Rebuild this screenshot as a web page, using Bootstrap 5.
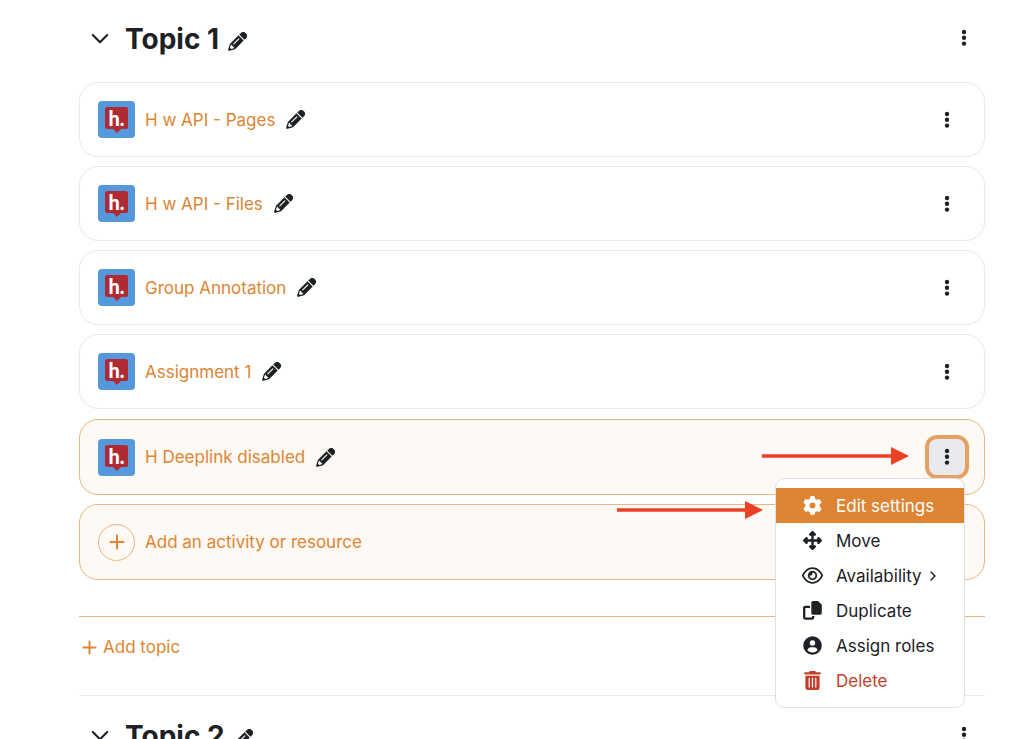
<!DOCTYPE html>
<html lang="en">
<head>
<meta charset="utf-8">
<meta name="viewport" content="width=device-width, initial-scale=1">
<title>Course topics</title>
<link href="https://cdn.jsdelivr.net/npm/bootstrap@5.3.0/dist/css/bootstrap.min.css" rel="stylesheet">
<style>
:root { --brand: #dd8533; --brand-line: #ecb581; --brand-tint: #fdf9f4; --ink: #1d2125; --line: #e9eaec; --danger: #c23f2c; --arrow: #ea4025; }
body { font-family: Inter, "Liberation Sans", sans-serif; font-size: 17px; line-height: 24px; color: var(--ink); background: #fff; }
svg { display: block; flex: none; }
.course { padding: 15px 39px 0 79px; }
.topic-head { height: 48px; padding-left: 12px; }
.topic-title { font-size: 28px; line-height: 40px; font-weight: 700; margin: 0 9px 0 16px; }
.bare { border: 0; background: none; padding: 0; color: var(--ink); }
.topic-menu { width: 42px; height: 42px; display: grid; place-items: center; margin-bottom: 3px; }
.activities { gap: 9px; margin-top: 19px; }
.activity { height: 75px; padding: 0 15px 0 18px; border: 1px solid var(--line); border-radius: 19px; }
.activity-hot { height: 76px; border-color: var(--brand-line); background: var(--brand-tint); }
.hot-group { gap: 9px; margin-top: 10px; }
.brand-link { color: var(--brand); text-decoration: none; }
.activity .brand-link { margin-left: 10px; }
.activity .edit { margin-left: 11px; }
.h-logo { width: 37px; height: 37px; padding: 6px 7px 0; border-radius: 4px; background: #5598dc; flex: none; }
.h-mark { position: relative; display: block; height: 22px; border-radius: 2px; background: #ae2b34; color: #fff; font: 900 20px/22px Lato, sans-serif; text-align: center; }
.h-mark::after { content: ""; position: absolute; left: 8px; top: 22px; border: 4px solid transparent; border-top-color: #ae2b34; border-bottom: 0; }
.kebab { width: 44px; height: 44px; display: grid; place-items: center; border-radius: 12px; }
.kebab.is-open { border: 4px solid #e5a163; background: #e9eaef; }
.add-circle { width: 37px; height: 37px; border: 1px solid var(--brand-line); border-radius: 50%; display: grid; place-items: center; color: var(--brand); }
.add-topic { border-top: 1px solid var(--brand-line); margin-top: 36px; padding: 18px 0 36px 3px; }
.add-topic .brand-link { gap: 6px; }
.next-topic { border-top: 1px solid var(--line); padding-top: 16px; }
.actions-menu { --bs-dropdown-link-active-bg: var(--brand); display: block; top: 43px; right: 4px; width: 190px; padding: 9px 0; border: 1px solid #dfe1e4; border-radius: 9px; font-size: 17px; color: var(--ink); z-index: 5; }
.actions-menu .dropdown-item { display: flex; align-items: center; height: 35px; padding: 0 0 0 25px; color: var(--ink); }
.actions-menu .dropdown-item.active { color: #fff; }
.actions-menu .dropdown-item.delete { color: var(--danger); }
.menu-icon { width: 23px; margin-right: 12px; display: grid; place-items: center; }
.pointer-a, .pointer-b { position: absolute; z-index: 6; }
.pointer-a { right: 75px; top: 27px; }
.pointer-b { right: 221px; top: 81px; }
</style>
</head>
<body>
<svg width="0" height="0" class="position-absolute" aria-hidden="true">
  <symbol id="pencil" viewBox="0 0 19 19"><g transform="translate(0.600 18.400) rotate(-45)"><path fill="currentColor" d="M0.300-0.900L5.500-3.700H17.600V3.700H5.500L0.300 0.900A1 1 0 0 1 0.300-0.900zM18.700-3.700h2a3.700 3.700 0 0 1 0 7.400h-2z"/><path fill="#fff" d="M2.800-0.900L5.900-2.400V2.400L2.800 0.900z"/><path d="M8.200-0.900h7.200" stroke="#fff" stroke-width="1.100" stroke-linecap="round"/></g></symbol>
  <symbol id="dots" viewBox="0 0 6 18"><g fill="currentColor"><circle cx="3" cy="3" r="2.200"/><circle cx="3" cy="8.800" r="2.200"/><circle cx="3" cy="14.600" r="2.200"/></g></symbol>
  <symbol id="chevron" viewBox="0 0 18 12"><path d="M1.800 2L9 9.200 16.200 2" fill="none" stroke="currentColor" stroke-width="2.100" stroke-linecap="round" stroke-linejoin="round"/></symbol>
  <symbol id="plus" viewBox="0 0 16 16"><path d="M8 1.500v13M1.500 8h13" fill="none" stroke="currentColor" stroke-width="2" stroke-linecap="round"/></symbol>
</svg>

<main class="course vh-100 overflow-hidden">
  <section>
    <header class="topic-head d-flex align-items-center">
      <button class="bare" aria-label="Collapse Topic 1"><svg width="18" height="12"><use href="#chevron"/></svg></button>
      <h2 class="topic-title">Topic 1</h2>
      <button class="bare pt-1" aria-label="Edit topic name"><svg width="19" height="19"><use href="#pencil"/></svg></button>
      <button class="bare topic-menu ms-auto" aria-label="Topic actions"><svg width="6" height="18"><use href="#dots"/></svg></button>
    </header>

    <div class="activities d-flex flex-column">
      <div class="activity d-flex align-items-center"><span class="h-logo"><span class="h-mark">h.</span></span><a class="brand-link" href="#">H w API - Pages</a><button class="bare edit" aria-label="Edit title"><svg width="19" height="19"><use href="#pencil"/></svg></button><button class="bare kebab ms-auto" aria-label="Actions"><svg width="6" height="18"><use href="#dots"/></svg></button></div>
      <div class="activity d-flex align-items-center"><span class="h-logo"><span class="h-mark">h.</span></span><a class="brand-link" href="#">H w API - Files</a><button class="bare edit" aria-label="Edit title"><svg width="19" height="19"><use href="#pencil"/></svg></button><button class="bare kebab ms-auto" aria-label="Actions"><svg width="6" height="18"><use href="#dots"/></svg></button></div>
      <div class="activity d-flex align-items-center"><span class="h-logo"><span class="h-mark">h.</span></span><a class="brand-link" href="#">Group Annotation</a><button class="bare edit" aria-label="Edit title"><svg width="19" height="19"><use href="#pencil"/></svg></button><button class="bare kebab ms-auto" aria-label="Actions"><svg width="6" height="18"><use href="#dots"/></svg></button></div>
      <div class="activity d-flex align-items-center"><span class="h-logo"><span class="h-mark">h.</span></span><a class="brand-link" href="#">Assignment 1</a><button class="bare edit" aria-label="Edit title"><svg width="19" height="19"><use href="#pencil"/></svg></button><button class="bare kebab ms-auto" aria-label="Actions"><svg width="6" height="18"><use href="#dots"/></svg></button></div>
    </div>

    <div class="hot-group d-flex flex-column">
      <div class="activity activity-hot d-flex align-items-center position-relative">
        <span class="h-logo"><span class="h-mark">h.</span></span><a class="brand-link" href="#">H Deeplink disabled</a><button class="bare edit" aria-label="Edit title"><svg width="19" height="19"><use href="#pencil"/></svg></button>
        <div class="dropdown ms-auto">
          <button class="bare kebab is-open" aria-label="Actions" aria-expanded="true"><svg width="6" height="18"><use href="#dots"/></svg></button>
          <div class="dropdown-menu actions-menu">
            <a class="dropdown-item active" href="#"><span class="menu-icon"><svg width="19" height="19" viewBox="0 0 512 512"><path fill="currentColor" d="M495.9 166.6c3.2 8.7 .5 18.4-6.4 24.6l-43.3 39.4c1.1 8.3 1.7 16.8 1.7 25.4s-.6 17.1-1.7 25.4l43.3 39.4c6.900 6.200 9.600 15.900 6.400 24.600c-4.400 11.900-9.700 23.300-15.800 34.300l-4.700 8.100c-6.600 11-14 21.400-22.100 31.200c-5.900 7.200-15.700 9.600-24.500 6.800l-55.700-17.700c-13.400 10.300-28.200 18.900-44 25.400l-12.500 57.100c-2 9.100-9 16.300-18.200 17.800c-13.800 2.300-28 3.500-42.500 3.500s-28.700-1.200-42.500-3.500c-9.200-1.500-16.200-8.700-18.200-17.800l-12.500-57.100c-15.800-6.500-30.600-15.100-44-25.400L83.100 425.900c-8.800 2.800-18.600 .3-24.500-6.800c-8.100-9.800-15.500-20.200-22.100-31.200l-4.700-8.100c-6.100-11-11.400-22.400-15.800-34.300c-3.200-8.700-.5-18.400 6.400-24.600l43.300-39.400C64.600 273.100 64 264.600 64 256s.6-17.100 1.700-25.400L22.400 191.200c-6.900-6.200-9.600-15.900-6.400-24.600c4.400-11.900 9.700-23.300 15.800-34.300l4.700-8.100c6.600-11 14-21.400 22.100-31.200c5.900-7.200 15.700-9.600 24.500-6.800l55.700 17.700c13.400-10.300 28.200-18.900 44-25.400l12.500-57.100c2-9.100 9-16.300 18.200-17.800C227.300 1.200 241.500 0 256 0s28.700 1.200 42.500 3.500c9.200 1.500 16.200 8.700 18.200 17.800l12.500 57.100c15.800 6.500 30.600 15.100 44 25.400l55.700-17.700c8.800-2.800 18.600-.3 24.500 6.800c8.100 9.800 15.500 20.200 22.100 31.200l4.700 8.100c6.100 11 11.400 22.400 15.800 34.300zM256 336a80 80 0 1 0 0-160 80 80 0 1 0 0 160z"/></svg></span>Edit settings</a>
            <a class="dropdown-item" href="#"><span class="menu-icon"><svg width="19" height="19" viewBox="0 0 512 512"><path fill="currentColor" d="M278.6 9.4c-12.5-12.5-32.8-12.5-45.3 0l-64 64c-9.2 9.2-11.9 22.9-6.9 34.9s16.6 19.8 29.6 19.8h32v96H128V192c0-12.9-7.8-24.6-19.8-29.6s-25.7-2.2-34.9 6.9l-64 64c-12.5 12.5-12.5 32.8 0 45.3l64 64c9.2 9.2 22.9 11.9 34.9 6.9s19.8-16.6 19.8-29.6V288h96v96H192c-12.9 0-24.6 7.8-29.6 19.8s-2.2 25.7 6.9 34.9l64 64c12.5 12.5 32.8 12.5 45.3 0l64-64c9.2-9.2 11.9-22.9 6.9-34.9s-16.6-19.8-29.6-19.8H288V288h96v32c0 12.9 7.8 24.6 19.8 29.6s25.700 2.200 34.900-6.900l64-64c12.500-12.500 12.500-32.800 0-45.300l-64-64c-9.200-9.200-22.900-11.900-34.900-6.900s-19.800 16.600-19.800 29.600v32H288V128h32c12.900 0 24.600-7.800 29.600-19.800s2.200-25.700-6.900-34.900l-64-64z"/></svg></span>Move</a>
            <a class="dropdown-item" href="#"><span class="menu-icon"><svg width="21" height="19" viewBox="0 0 576 512"><path fill="currentColor" d="M288 80c-65.2 0-118.8 29.6-159.9 67.7C89.6 183.5 63 226 49.4 256c13.6 30 40.2 72.5 78.6 108.3C169.2 402.4 222.8 432 288 432s118.8-29.6 159.9-67.7C486.4 328.5 513 286 526.6 256c-13.6-30-40.2-72.5-78.6-108.3C406.8 109.6 353.2 80 288 80zM95.4 112.6C142.5 68.8 207.2 32 288 32s145.5 36.8 192.6 80.6c46.8 43.5 78.1 95.4 93 131.1c3.3 7.9 3.3 16.7 0 24.6c-14.9 35.7-46.2 87.7-93 131.1C433.5 443.2 368.8 480 288 480s-145.5-36.8-192.6-80.6C48.6 356 17.3 304 2.500 268.300c-3.300-7.900-3.300-16.700 0-24.600C17.300 208 48.600 156 95.400 112.600zM288 336c44.200 0 80-35.800 80-80s-35.800-80-80-80c-.7 0-1.300 0-2 0c1.300 5.100 2 10.500 2 16c0 35.300-28.700 64-64 64c-5.500 0-10.900-.7-16-2c0 .7 0 1.300 0 2c0 44.200 35.800 80 80 80zm0-208a128 128 0 1 1 0 256 128 128 0 1 1 0-256z"/></svg></span>Availability<svg class="ms-2" width="8" height="12" viewBox="0 0 8 12"><path d="M1 2l4 4-4 4" fill="none" stroke="currentColor" stroke-width="1.500" stroke-linecap="round" stroke-linejoin="round"/></svg></a>
            <a class="dropdown-item" href="#"><span class="menu-icon"><svg width="19" height="19" viewBox="0 0 19 19"><path fill="currentColor" d="M10 0h5l3.800 3.800V12a1.700 1.700 0 0 1-1.700 1.700H10A1.700 1.700 0 0 1 8.300 12V1.700A1.700 1.700 0 0 1 10 0z"/><path d="M7 5.800H2.200a1 1 0 0 0-1 1v9.800a1 1 0 0 0 1 1h7a1 1 0 0 0 1-1V15" fill="none" stroke="currentColor" stroke-width="2.300"/></svg></span>Duplicate</a>
            <a class="dropdown-item" href="#"><span class="menu-icon"><svg width="19" height="19" viewBox="0 0 19 19"><circle cx="9.500" cy="9.500" r="9.300" fill="currentColor"/><circle cx="9.500" cy="7" r="2.700" fill="#fff"/><path d="M4.300 14.300c.7-2 2-3 3.700-3h3c1.700 0 3 1 3.700 3a7 7 0 0 1-10.400 0z" fill="#fff"/></svg></span>Assign roles</a>
            <a class="dropdown-item delete" href="#"><span class="menu-icon"><svg width="17" height="19" viewBox="0 0 17 19"><path fill="currentColor" d="M5.800 0h5.400l.8 1.200h3.800a1 1 0 0 1 0 2.300H1.200a1 1 0 0 1 0-2.300H5zM1.400 4.700h14.200v12a2.300 2.300 0 0 1-2.300 2.300H3.700a2.300 2.300 0 0 1-2.300-2.300z"/><path d="M5.200 7.300v8.800M8.500 7.300v8.800M11.800 7.300v8.800" stroke="#fff" stroke-width="1.200" stroke-linecap="round"/></svg></span>Delete</a>
          </div>
        </div>
        <svg class="pointer-a" width="147" height="18" viewBox="0 0 147 18"><path d="M0 7.200h129V0l18 9-18 9v-7.200H0z" fill="#ea4025"/></svg>
        <svg class="pointer-b" width="146" height="18" viewBox="0 0 146 18"><path d="M0 7.200h128V0l18 9-18 9v-7.200H0z" fill="#ea4025"/></svg>
      </div>
      <div class="activity activity-hot d-flex align-items-center">
        <span class="add-circle"><svg width="16" height="16"><use href="#plus"/></svg></span><a class="brand-link" href="#">Add an activity or resource</a>
      </div>
    </div>
  </section>

  <div class="add-topic d-flex"><a class="brand-link d-flex align-items-center" href="#"><svg width="15" height="15"><use href="#plus"/></svg>Add topic</a></div>

  <section class="next-topic">
    <header class="topic-head d-flex align-items-center">
      <button class="bare" aria-label="Collapse Topic 2"><svg width="18" height="12"><use href="#chevron"/></svg></button>
      <h2 class="topic-title">Topic 2</h2>
      <button class="bare pt-1" aria-label="Edit topic name"><svg width="19" height="19"><use href="#pencil"/></svg></button>
      <button class="bare topic-menu ms-auto" aria-label="Topic actions"><svg width="6" height="18"><use href="#dots"/></svg></button>
    </header>
  </section>
</main>
<script src="https://cdn.jsdelivr.net/npm/bootstrap@5.3.0/dist/js/bootstrap.bundle.min.js"></script>
</body>
</html>
